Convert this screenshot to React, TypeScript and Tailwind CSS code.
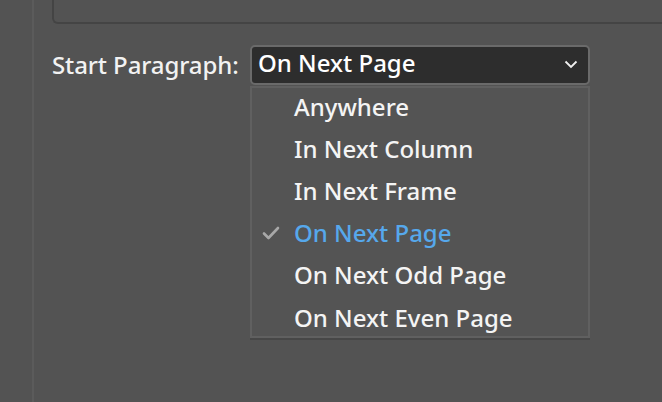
import React from "react";

const items = [
  "Anywhere",
  "In Next Column",
  "In Next Frame",
  "On Next Page",
  "On Next Odd Page",
  "On Next Even Page",
];

export default function App() {
  return (
    <div
      className="w-[662px] h-[402px] bg-[#535353] flex overflow-hidden"
      style={{ fontFamily: '"Noto Sans", "Open Sans", sans-serif' }}
    >
      <div className="w-[34px] h-full border-r-2 border-[#5b5b5b] shrink-0" />
      <div className="flex-1 flex flex-col pl-[18px]">
        <div className="h-[24px] border-l-2 border-b-2 border-[#444444] rounded-bl-[6px] -mr-4" />
        <div className="flex items-center mt-[20px] h-[41px]">
          <span className="text-[24px] font-medium text-[#f2f2f2] tracking-[-0.1px] w-[198px] leading-none">
            Start Paragraph:
          </span>
          <div className="relative w-[340px] h-[40px]">
            <div className="w-full h-full rounded-[5px] bg-[#2d2d2d] border-2 border-[#6a6a6a] flex items-center justify-between pl-[6px] pr-[10px] pb-[3px]">
              <span className="text-[24px] font-medium text-white tracking-[0px] leading-none">On Next Page</span>
              <svg width="14" height="9" viewBox="0 0 14 9" fill="none" className="mt-[2px]">
                <path d="M1.5 1.5 L7 7 L12.5 1.5" stroke="#f0f0f0" strokeWidth="1.8" />
              </svg>
            </div>
            <div className="absolute left-0 top-[41px] w-full h-[252px] bg-[#545454] border-2 border-[#606060] shadow-[0_2px_0_#474747] flex flex-col">
              {items.map((it) => {
                const sel = it === "On Next Page";
                return (
                  <div key={it} className="h-[42.2px] shrink-0 flex items-center pb-[4px]">
                    <div className="w-[42px] flex justify-end pr-[14px]">
                      {sel && (
                        <svg width="18" height="14" viewBox="0 0 18 14" fill="none">
                          <path d="M2 7.5 L6.5 12 L16 2" stroke="#a8a8a8" strokeWidth="2.6" strokeLinecap="round" strokeLinejoin="round" />
                        </svg>
                      )}
                    </div>
                    <span
                      className={
                        "text-[24px] font-medium tracking-[0px] leading-none " +
                        (sel ? "text-[#56a8ec]" : "text-[#f4f4f4]")
                      }
                    >
                      {it}
                    </span>
                  </div>
                );
              })}
            </div>
          </div>
        </div>
      </div>
    </div>
  );
}
